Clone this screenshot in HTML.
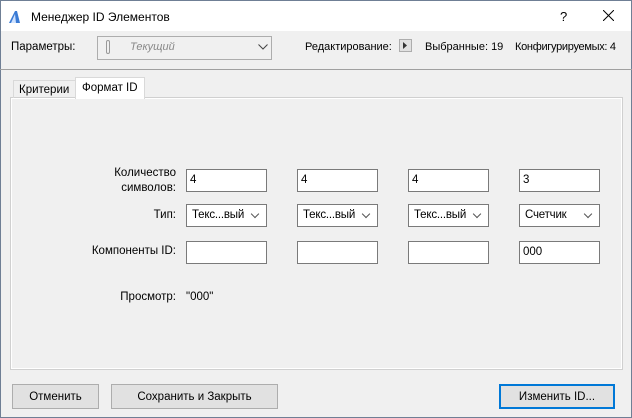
<!DOCTYPE html><html><head><meta charset="utf-8"><style>
*{box-sizing:border-box;margin:0;padding:0}
body{width:632px;height:418px;background:#f0f0f0;font-family:"Liberation Sans",sans-serif;font-size:11.5px;color:#000;position:relative;overflow:hidden}
.a{position:absolute;white-space:nowrap}
.f{position:absolute;background:#fff;border:1px solid #7a7a7a;height:23px;width:81px;padding:4px 0 0 3px}
.s{position:absolute;background:#fff;border:1px solid #7a7a7a;height:23px;width:81px;padding:4px 0 0 5px;letter-spacing:-0.2px}
.s:after{content:"";position:absolute;right:8px;top:6px;width:5px;height:5px;border-right:1px solid #555;border-bottom:1px solid #555;transform:rotate(45deg)}
.b{position:absolute;background:#e1e1e1;border:1px solid #adadad;height:25px;text-align:center;padding-top:6px}
.r{text-align:right}
</style></head><body>
<div class="a" style="left:0;top:0;width:632px;height:31px;background:#fff"></div>
<div class="a" style="left:0;top:0;width:632px;height:418px;border:1px solid #6f7f95"></div>
<svg class="a" style="left:8px;top:10px" width="16" height="14"><path d="M1 13 L7 1 L9 1 L12 13 Z" fill="#3a7bd5"/><path d="M3 13 L7 4 L8 13Z" fill="#cfe2ff"/></svg>
<div class="a" style="left:31px;top:10px;font-size:12px">Менеджер ID Элементов</div>
<div class="a" style="left:560px;top:9px;font-size:13px">?</div>
<svg class="a" style="left:603px;top:10px" width="11" height="11"><path d="M0 0L11 11M11 0L0 11" stroke="#000" stroke-width="1"/></svg>
<div class="a" style="left:11px;top:41px">Параметры:</div>
<div class="a" style="left:97px;top:36px;width:175px;height:24px;border:1px solid #adadad;background:#f0f0f0"></div>
<div class="a" style="left:106px;top:40px;width:4px;height:14px;border:1px solid #999;border-radius:2px"></div>
<div class="a" style="left:130px;top:41px;color:#888;font-style:italic;font-size:11px">Текущий</div>
<svg class="a" style="left:258px;top:44px" width="10" height="6"><path d="M0.5 0.5L5 5L9.5 0.5" fill="none" stroke="#444"/></svg>
<div class="a" style="left:305px;top:41px;font-size:11px">Редактирование:</div>
<div class="a" style="left:399px;top:39px;width:13px;height:13px;border:1px solid #adadad;background:#e1e1e1"></div>
<svg class="a" style="left:403px;top:42px" width="5" height="7"><path d="M0 0L4 3.5L0 7Z" fill="#333"/></svg>
<div class="a" style="left:425px;top:41px;font-size:11px">Выбранные: 19</div>
<div class="a" style="left:515px;top:41px;font-size:11px;letter-spacing:-0.3px">Конфигурируемых: 4</div>
<div class="a" style="left:0;top:69px;width:632px;height:1px;background:#a0a0a0"></div>
<div class="a" style="left:10px;top:97px;width:613px;height:273px;border:1px solid #d0d0d0;outline:1px solid #fff;outline-offset:-2px"></div>
<div class="a" style="left:13px;top:80px;width:63px;height:18px;border:1px solid #d9d9d9;border-bottom:none;padding:3px 0 0 5px">Критерии</div>
<div class="a" style="left:75px;top:77px;width:70px;height:22px;border:1px solid #d9d9d9;border-bottom:none;background:#fff;padding:4px 0 0 6px">Формат ID</div>
<div class="a r" style="left:60px;top:166px;width:116px;line-height:15px">Количество<br>символов:</div>
<div class="a r" style="left:60px;top:209px;width:116px">Тип:</div>
<div class="a r" style="left:60px;top:245px;width:116px">Компоненты ID:</div>
<div class="a r" style="left:60px;top:291px;width:116px">Просмотр:</div>
<div class="a" style="left:186px;top:291px">"000"</div>
<div class="f" style="left:186px;top:169px">4</div><div class="f" style="left:297px;top:169px">4</div><div class="f" style="left:408px;top:169px">4</div><div class="f" style="left:519px;top:169px">3</div>
<div class="s" style="left:186px;top:204px">Текс...вый</div><div class="s" style="left:297px;top:204px">Текс...вый</div><div class="s" style="left:408px;top:204px">Текс...вый</div><div class="s" style="left:519px;top:204px">Счетчик</div>
<div class="f" style="left:186px;top:241px"></div><div class="f" style="left:297px;top:241px"></div><div class="f" style="left:408px;top:241px"></div><div class="f" style="left:519px;top:241px">000</div>
<div class="b" style="left:12px;top:384px;width:87px">Отменить</div>
<div class="b" style="left:111px;top:384px;width:167px">Сохранить и Закрыть</div>
<div class="b" style="left:499px;top:384px;width:116px;border:2px solid #0078d7;padding-top:5px">Изменить ID...</div>
</body></html>
